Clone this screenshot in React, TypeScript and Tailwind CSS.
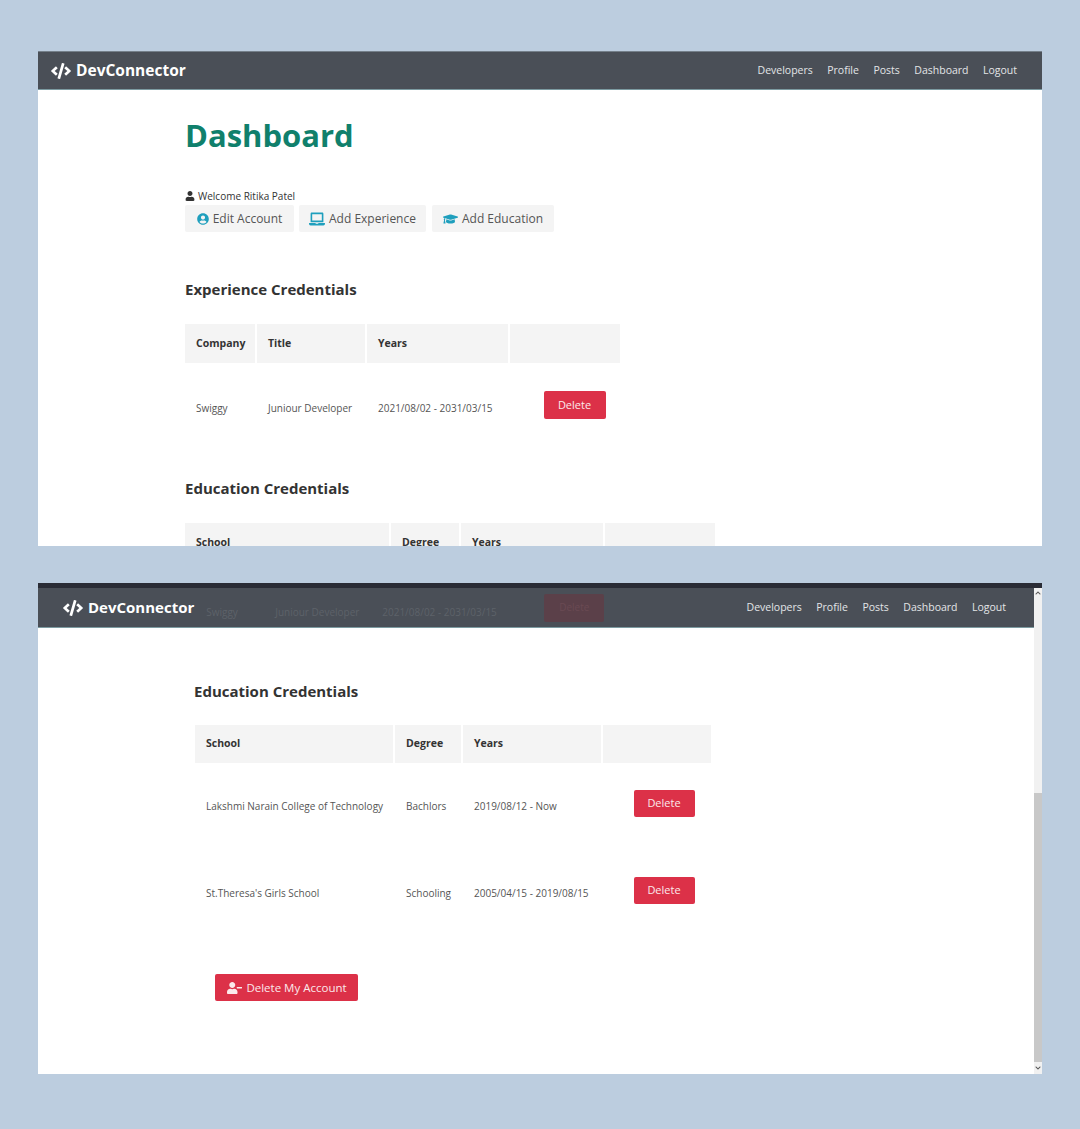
import { FaCode, FaUser, FaUserCircle, FaLaptop, FaGraduationCap, FaUserMinus, FaChevronUp, FaChevronDown } from "react-icons/fa";

const font = { fontFamily: '"Open Sans", "Noto Sans", sans-serif' };

function Logo({ className }: { className: string }) {
  return (
    <div className={`flex items-center gap-[5px] font-bold text-white ${className}`}>
      <FaCode className="h-[18px] w-[20px]" />
      <span>DevConnector</span>
    </div>
  );
}

function NavLinks({ className }: { className: string }) {
  return (
    <div className={`flex items-center text-[#e3e5e7] ${className}`}>
      <span>Developers</span>
      <span>Profile</span>
      <span>Posts</span>
      <span>Dashboard</span>
      <span>Logout</span>
    </div>
  );
}

function DangerButton({ children, className }: { children: React.ReactNode; className: string }) {
  return (
    <button className={`flex items-center justify-center rounded-[2px] bg-[#dc3148] text-[#fbe9eb] ${className}`}>
      {children}
    </button>
  );
}

function LightButton({ icon, label, className }: { icon: React.ReactNode; label: string; className: string }) {
  return (
    <div className={`flex h-[27px] items-center justify-center gap-[4px] rounded-[2px] bg-[#f4f4f4] text-[12px] text-[#555] ${className}`}>
      {icon}
      <span>{label}</span>
    </div>
  );
}

function HeaderCell({ label }: { label?: string }) {
  return (
    <div className="flex items-center bg-[#f4f4f4] pl-[11px] text-[10.5px] font-bold text-[#333]">{label}</div>
  );
}

function BodyCell({ label, className = "" }: { label: string; className?: string }) {
  return <div className={`flex items-center pl-[11px] text-[10px] text-[#555] ${className}`}>{label}</div>;
}

export default function App() {
  return (
    <div style={font} className="flex h-[1129px] w-[1080px] flex-col gap-[37px] overflow-hidden bg-[#bccddf] pl-[38px] pr-[38px] pt-[51px]">
      {/* Top capture */}
      <section className="h-[495px] w-[1004px] overflow-hidden bg-white">
        <nav className="flex h-[39px] items-center justify-between border-b border-t border-b-[#7c9ba1] border-t-[#75808a] bg-[#4a4f57] pl-[13px] pr-[25px]">
          <Logo className="text-[15.5px]" />
          <NavLinks className="gap-[14.5px] text-[10.5px]" />
        </nav>
        <div className="pl-[147px]">
          <h1 className="mt-[26px] text-[31px] font-bold leading-[38px] text-[#10806c]">Dashboard</h1>
          <p className="mt-[35px] flex h-[14px] items-center gap-[3px] text-[10px] text-[#333]">
            <FaUser className="h-[10px] w-[10px]" />
            Welcome Ritika Patel
          </p>
          <div className="mt-[2px] flex gap-[5px]">
            <LightButton className="w-[109px]" label="Edit Account" icon={<FaUserCircle className="h-[12px] w-[12px] text-[#1f9fbd]" />} />
            <LightButton className="w-[127px]" label="Add Experience" icon={<FaLaptop className="h-[14px] w-[16px] text-[#1f9fbd]" />} />
            <LightButton className="ml-[1px] w-[122px]" label="Add Education" icon={<FaGraduationCap className="h-[14px] w-[15px] text-[#1f9fbd]" />} />
          </div>
          <h2 className="mt-[45px] text-[15px] font-bold leading-[24px] text-[#333]">Experience Credentials</h2>
          <div className="mt-[23px] grid w-fit grid-cols-[70px_108px_141px_110px] grid-rows-[39px_90px] gap-x-[2px]">
            <HeaderCell label="Company" />
            <HeaderCell label="Title" />
            <HeaderCell label="Years" />
            <HeaderCell />
            <BodyCell label="Swiggy" />
            <BodyCell label="Juniour Developer" />
            <BodyCell label="2021/08/02 - 2031/03/15" />
            <div className="flex items-center justify-center pb-[6px] pl-[19px]">
              <DangerButton className="h-[28px] w-[62px] text-[11px]">Delete</DangerButton>
            </div>
          </div>
          <h2 className="mt-[23px] text-[15px] font-bold leading-[24px] text-[#333]">Education Credentials</h2>
          <div className="mt-[23px] grid w-fit grid-cols-[204px_68px_142px_110px] grid-rows-[39px] gap-x-[2px]">
            <HeaderCell label="School" />
            <HeaderCell label="Degree" />
            <HeaderCell label="Years" />
            <HeaderCell />
          </div>
        </div>
      </section>

      {/* Bottom capture */}
      <section className="h-[491px] w-[1004px] overflow-hidden bg-white">
        <div className="h-[5px] bg-[#2a2c36]" />
        <div className="flex h-[486px]">
          <div className="min-w-0 flex-1">
            <nav className="flex h-[40px] items-center border-b border-b-[#7c9ba1] bg-[#4a4f57] pl-[25px] pr-[28px]">
              <Logo className="text-[15px]" />
              <div className="ml-[12px] flex flex-1 items-center text-[10px] text-[#5d6269]">
                <span className="mt-[9px] w-[69px]">Swiggy</span>
                <span className="mt-[9px] w-[107px]">Juniour Developer</span>
                <span className="mt-[9px] w-[162px]">2021/08/02 - 2031/03/15</span>
                <span className="flex h-[28px] w-[60px] items-center justify-center rounded-[2px] bg-[#5b4049] text-[#6a4a53]">Delete</span>
              </div>
              <NavLinks className="gap-[14.5px] text-[10.5px]" />
            </nav>
            <div className="pl-[156px]">
              <h2 className="mt-[51px] text-[15px] font-bold leading-[24px] text-[#333]">Education Credentials</h2>
              <div className="ml-[1px] mt-[22px] grid w-fit grid-cols-[198px_66px_138px_108px] grid-rows-[38px_87px_87px] gap-x-[2px]">
                <HeaderCell label="School" />
                <HeaderCell label="Degree" />
                <HeaderCell label="Years" />
                <HeaderCell />
                <BodyCell label="Lakshmi Narain College of Technology" />
                <BodyCell label="Bachlors" />
                <BodyCell label="2019/08/12 - Now" />
                <div className="flex items-center justify-center pb-[6px] pl-[14px]">
                  <DangerButton className="h-[27px] w-[61px] text-[11px]">Delete</DangerButton>
                </div>
                <BodyCell label="St.Theresa's Girls School" />
                <BodyCell label="Schooling" />
                <BodyCell label="2005/04/15 - 2019/08/15" />
                <div className="flex items-center justify-center pb-[6px] pl-[14px]">
                  <DangerButton className="h-[27px] w-[61px] text-[11px]">Delete</DangerButton>
                </div>
              </div>
              <DangerButton className="ml-[21px] mt-[37px] h-[27px] w-[143px] gap-[3px] text-[11.5px]">
                <FaUserMinus className="h-[12px] w-[17px]" />
                Delete My Account
              </DangerButton>
            </div>
          </div>
          {/* Scrollbar */}
          <div className="flex w-[8px] flex-col bg-[#f1f1f1]">
            <div className="flex h-[205px] justify-center pt-[2px] text-[#555]">
              <FaChevronUp className="h-[6px] w-[6px]" />
            </div>
            <div className="flex-1 bg-[#c8c8c8]" />
            <div className="flex h-[12px] items-center justify-center text-[#555]">
              <FaChevronDown className="h-[6px] w-[6px]" />
            </div>
          </div>
        </div>
      </section>
    </div>
  );
}
